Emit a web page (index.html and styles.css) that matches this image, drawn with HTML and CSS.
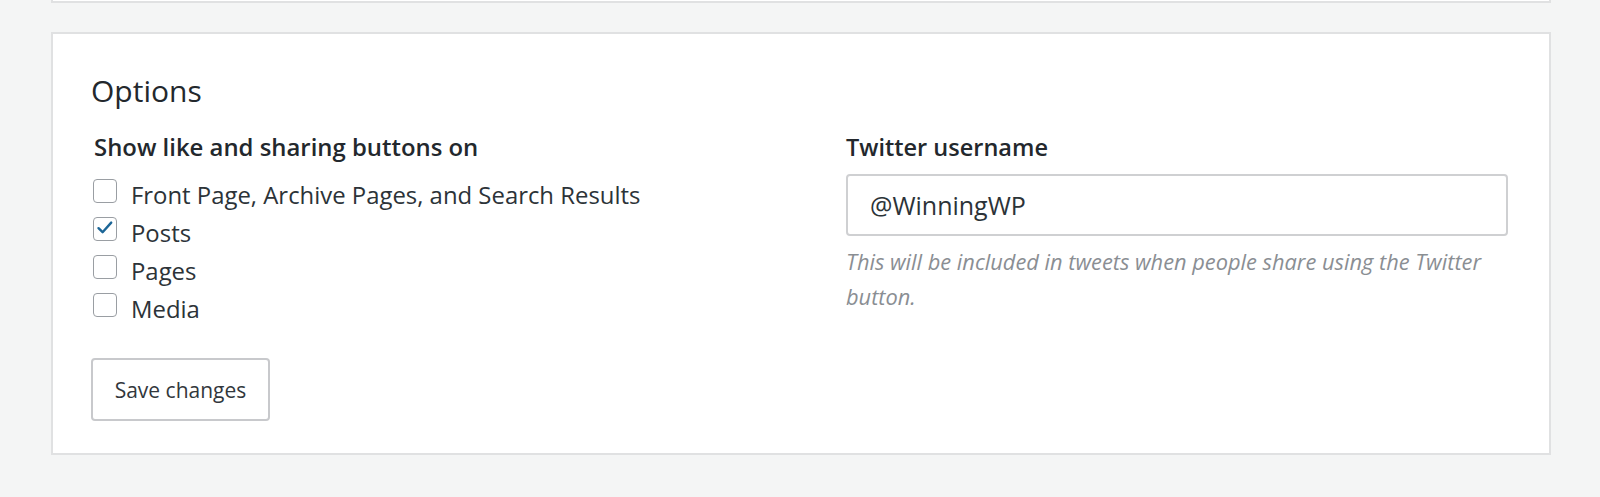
FILE: index.html
```html
<!DOCTYPE html>
<html lang="en">
<head>
<meta charset="utf-8">
<title>Sharing options</title>
<link rel="stylesheet" href="styles.css">
</head>
<body>
<div class="page">
  <div class="card card-prev"></div>
  <form class="card options">
    <h2 class="title">Options</h2>
    <div class="cols">
      <div class="col">
        <div class="field-label field-label-left">Show like and sharing buttons on</div>
        <div class="checks">
          <label class="check"><span class="box"></span><span>Front Page, Archive Pages, and Search Results</span></label>
          <label class="check"><span class="box checked"><svg viewBox="0 0 24 24" width="24" height="24"><path d="M5.5 12.2 L9.6 16.2 L18.2 6.6" fill="none" stroke="#1c6697" stroke-width="2.4" stroke-linecap="round" stroke-linejoin="round"/></svg></span><span>Posts</span></label>
          <label class="check"><span class="box"></span><span>Pages</span></label>
          <label class="check"><span class="box"></span><span>Media</span></label>
        </div>
        <button type="button" class="btn">Save changes</button>
      </div>
      <div class="col">
        <div class="field-label">Twitter username</div>
        <div class="input">@WinningWP</div>
        <p class="desc">This will be included in tweets when people share using the Twitter button.</p>
      </div>
    </div>
  </form>
</div>
</body>
</html>
```
FILE: styles.css
```css
html, body {
  margin: 0;
  padding: 0;
  background: #f4f5f5;
}
body {
  font-family: "Open Sans", "Noto Sans", sans-serif;
  color: #2c3338;
}
.page {
  padding-left: 51px;
  display: flex;
  flex-direction: column;
  gap: 29px;
}
.card {
  width: 1500px;
  box-sizing: border-box;
  background: #fff;
  border: 2px solid #e0e1e2;
}
.card-prev {
  height: 3px;
  border-top: none;
}
.options {
  padding: 37px 41px 32px 38px;
  margin: 0;
}
.title {
  margin: 0;
  font-size: 30px;
  line-height: 40px;
  font-weight: 400;
  color: #23282d;
}
.cols {
  display: grid;
  grid-template-columns: 1fr 1fr;
  column-gap: 93px;
  margin-top: 22px;
}
.col {
  display: flex;
  flex-direction: column;
  align-items: flex-start;
}
.field-label {
  font-size: 23.5px;
  line-height: 28px;
  font-weight: 600;
  color: #23282d;
}
.field-label-left {
  padding-left: 3px;
  font-size: 23.9px;
}
.checks {
  margin-top: 15px;
  display: flex;
  flex-direction: column;
}
.check {
  display: flex;
  align-items: flex-start;
  gap: 14px;
  font-size: 23.9px;
  line-height: 38px;
  color: #2c3338;
}
.box {
  width: 24px;
  height: 24px;
  box-sizing: border-box;
  border: 1.5px solid #9a9ea3;
  border-radius: 4px;
  margin-top: 2.5px;
  margin-left: 2px;
  position: relative;
  background: #fff;
}
.box svg {
  position: absolute;
  left: -1.5px;
  top: -1.5px;
}
.btn {
  margin-top: 30px;
  width: 179px;
  height: 63px;
  background: #fff;
  border: 2px solid #c8c9cc;
  border-radius: 4px;
  font-family: "Open Sans", "Noto Sans", sans-serif;
  font-size: 21px;
  color: #32373c;
  padding: 0;
}
.input {
  margin-top: 13px;
  width: 100%;
  height: 62px;
  box-sizing: border-box;
  border: 2px solid #cfd0d2;
  border-radius: 4px;
  padding: 0 22px;
  display: flex;
  align-items: center;
  font-size: 25px;
  color: #2c3338;
}
.desc {
  margin: 8px 0 0;
  font-size: 21.8px;
  line-height: 35px;
  font-style: italic;
  color: #8a8e93;
}
```
